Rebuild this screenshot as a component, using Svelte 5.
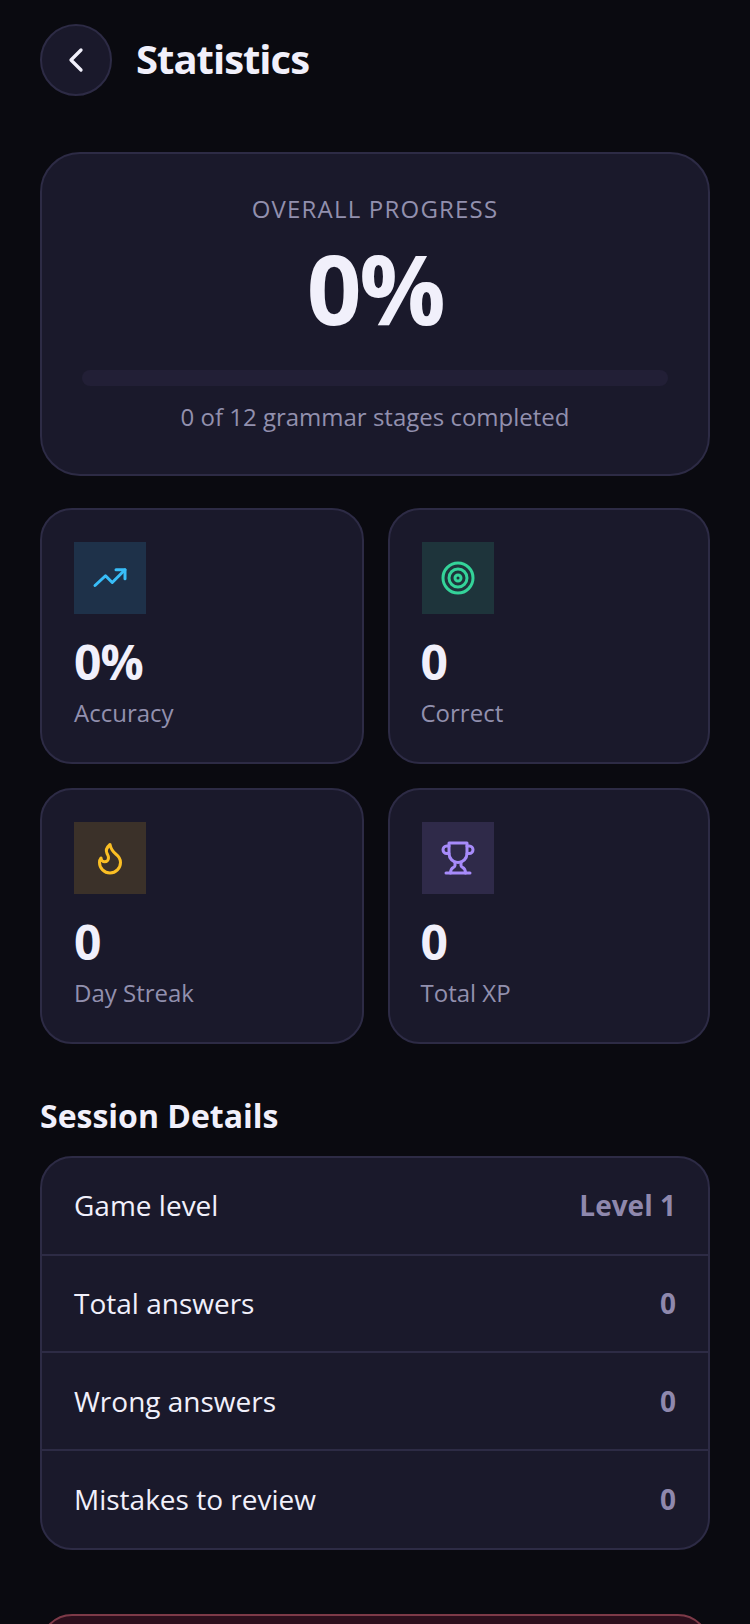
<script>
  const stats = [
    { value: '0%', label: 'Accuracy', tone: 'blue', icon: 'trend' },
    { value: '0', label: 'Correct', tone: 'green', icon: 'target' },
    { value: '0', label: 'Day Streak', tone: 'amber', icon: 'flame' },
    { value: '0', label: 'Total XP', tone: 'purple', icon: 'trophy' }
  ];

  const details = [
    { label: 'Game level', value: 'Level 1' },
    { label: 'Total answers', value: '0' },
    { label: 'Wrong answers', value: '0' },
    { label: 'Mistakes to review', value: '0' }
  ];
</script>

<div class="page">
  <header class="top">
    <button class="back" aria-label="Back">
      <svg width="40" height="40" viewBox="0 0 24 24" fill="none" stroke="#f1f0fb" stroke-width="2" stroke-linecap="round" stroke-linejoin="round">
        <path d="m15 18-6-6 6-6" />
      </svg>
    </button>
    <h1>Statistics</h1>
  </header>

  <section class="card overall">
    <div class="eyebrow">OVERALL PROGRESS</div>
    <div class="percent">0%</div>
    <div class="track"></div>
    <div class="caption">0 of 12 grammar stages completed</div>
  </section>

  <section class="grid">
    {#each stats as stat}
      <div class="card stat">
        <div class="badge {stat.tone}">
          <svg width="36" height="36" viewBox="0 0 24 24" fill="none" stroke="currentColor" stroke-width="2" stroke-linecap="round" stroke-linejoin="round">
            {#if stat.icon === 'trend'}
              <path d="M2 17 9 10.500 13.500 15 22 6.500" />
              <path d="M16 6.500h6v6" />
            {:else if stat.icon === 'target'}
              <circle cx="12" cy="12" r="10" />
              <circle cx="12" cy="12" r="6" />
              <circle cx="12" cy="12" r="2" />
            {:else if stat.icon === 'flame'}
              <path d="M8.500 14.500A2.500 2.500 0 0 0 11 12c0-1.380-.5-2-1-3-1.072-2.143-.224-4.054 2-6 .5 2.500 2 4.900 4 6.500 2 1.600 3 3.500 3 5.500a7 7 0 1 1-14 0c0-1.153.433-2.294 1-3a2.500 2.500 0 0 0 2.500 2.500z" />
            {:else}
              <path d="M6 9H4.500a2.500 2.500 0 0 1 0-5H6" />
              <path d="M18 9h1.500a2.500 2.500 0 0 0 0-5H18" />
              <path d="M4 22h16" />
              <path d="M10 14.660V17c0 .55-.47.98-.97 1.210C7.850 18.750 7 20.240 7 22" />
              <path d="M14 14.660V17c0 .55.47.98.97 1.210C16.150 18.750 17 20.240 17 22" />
              <path d="M18 2H6v7a6 6 0 0 0 12 0V2Z" />
            {/if}
          </svg>
        </div>
        <div class="value">{stat.value}</div>
        <div class="label">{stat.label}</div>
      </div>
    {/each}
  </section>

  <h2>Session Details</h2>
  <section class="card details">
    {#each details as row}
      <div class="row">
        <span>{row.label}</span>
        <span class="row-value">{row.value}</span>
      </div>
    {/each}
  </section>

  <button class="reset" aria-label="Reset"></button>
</div>

<style>
  :global(body) {
    background: #0a0a10;
    overflow: hidden;
  }

  .page {
    height: 1624px;
    overflow: hidden;
    box-sizing: border-box;
    padding: 24px 40px 0;
    font-family: 'Open Sans', sans-serif;
    color: #f1f0fb;
  }

  .top {
    display: flex;
    align-items: center;
    gap: 24px;
    margin-bottom: 56px;
  }

  .back {
    width: 72px;
    height: 72px;
    border-radius: 50%;
    padding: 0;
    display: flex;
    align-items: center;
    justify-content: center;
    background: #1a192b;
    border: 2px solid #2d2b45;
  }

  h1 {
    margin: 0 0 2px;
    font-size: 40px;
    line-height: 60px;
    font-weight: 700;
    letter-spacing: -1px;
  }

  .card {
    box-sizing: border-box;
    background: #1a192b;
    border: 2px solid #2d2b45;
  }

  .overall {
    height: 324px;
    border-radius: 40px;
    padding: 39px 40px 0;
    display: flex;
    flex-direction: column;
    align-items: center;
    margin-bottom: 32px;
  }

  .eyebrow {
    font-size: 24px;
    line-height: 32px;
    letter-spacing: 1.2px;
    color: #9290ae;
  }

  .percent {
    font-size: 96px;
    line-height: 104px;
    font-weight: 700;
    letter-spacing: -2.4px;
    margin-top: 11px;
  }

  .track {
    align-self: stretch;
    height: 16px;
    border-radius: 8px;
    background: #221f36;
    margin-top: 30px;
  }

  .caption {
    margin-top: 15px;
    font-size: 24px;
    line-height: 32px;
    color: #9290ae;
  }

  .grid {
    display: grid;
    grid-template-columns: 323.5px 1fr;
    gap: 24px;
  }

  .stat {
    height: 256px;
    border-radius: 32px;
    padding: 32px;
  }

  .stat:nth-child(even) .value,
  .stat:nth-child(even) .label {
    margin-left: -1px;
  }

  .badge {
    width: 72px;
    height: 72px;
    display: flex;
    align-items: center;
    justify-content: center;
    margin-bottom: 20px;
  }

  .blue {
    color: #38bdf8;
    background: rgba(56, 189, 248, 0.15);
  }

  .green {
    color: #34d399;
    background: rgba(52, 211, 153, 0.15);
  }

  .amber {
    color: #fbbf24;
    background: rgba(251, 191, 36, 0.15);
  }

  .purple {
    color: #a78bfa;
    background: rgba(167, 139, 250, 0.15);
  }

  .value {
    font-size: 48px;
    line-height: 56px;
    font-weight: 700;
    letter-spacing: -1px;
  }

  .label {
    margin-top: 7px;
    font-size: 24px;
    line-height: 32px;
    color: #9290ae;
  }

  h2 {
    margin: 50px 0 17.75px;
    font-size: 32px;
    line-height: 44px;
    font-weight: 700;
  }

  .details {
    border-radius: 32px;
    overflow: hidden;
  }

  .row {
    height: 97.75px;
    box-sizing: border-box;
    padding: 0 32px;
    display: flex;
    align-items: center;
    justify-content: space-between;
    font-size: 28px;
    border-bottom: 2px solid #2d2b45;
  }

  .row:first-child {
    padding-bottom: 1px;
  }

  .row:last-child {
    height: 96.5px;
    border-bottom: none;
  }

  .row-value {
    font-weight: 700;
    color: #8f88ad;
  }

  .reset {
    display: block;
    box-sizing: border-box;
    width: 100%;
    height: 96px;
    margin-top: 64.5px;
    border-radius: 32px;
    background: #2c0f1c;
    border: 2px solid #7d3a48;
  }
</style>
